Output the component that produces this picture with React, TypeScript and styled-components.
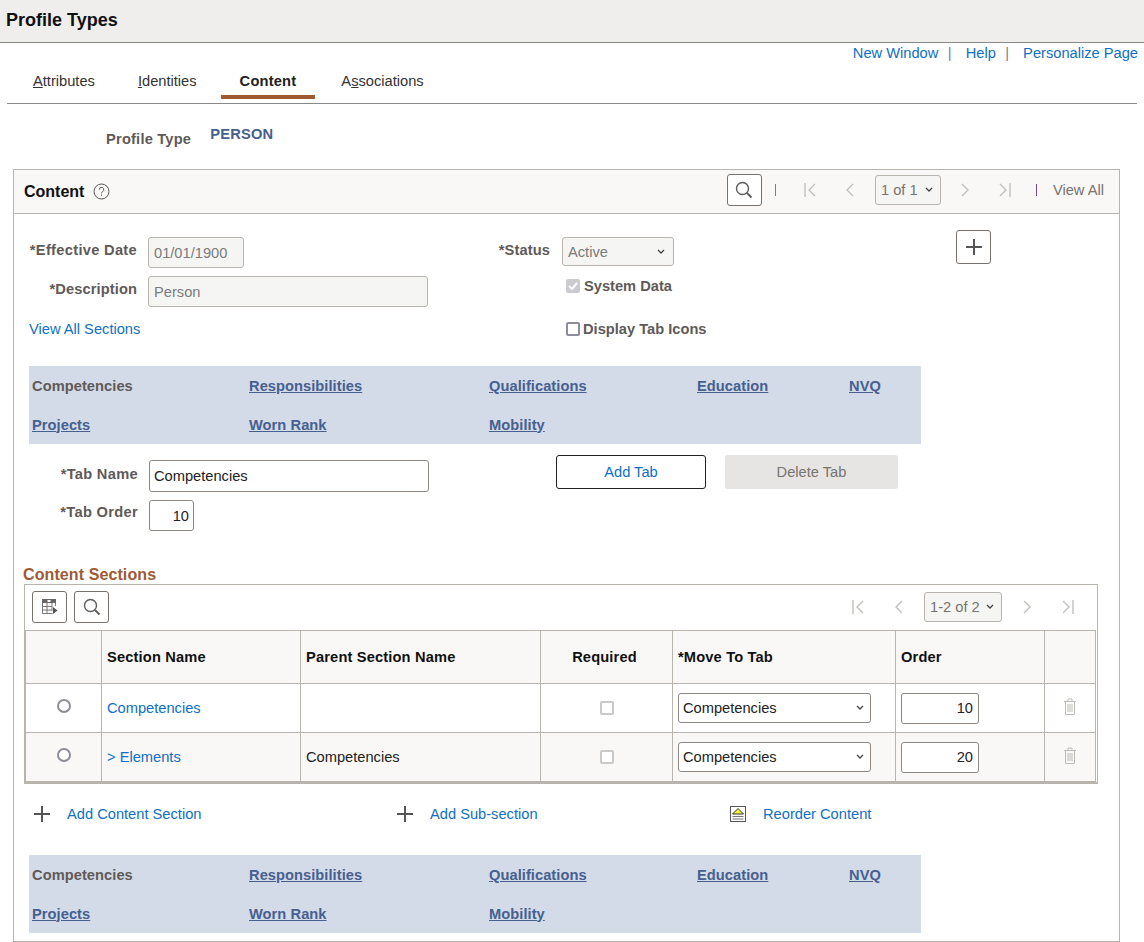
import React from 'react';
import styled, { createGlobalStyle } from 'styled-components';

const LINK = '#0f6fc6';
const LABEL = '#5f5a58';
const NAVY = '#46608f';
const RUST = '#9e5a35';
const LINE = '#b9b5ae';
const CHEVRON = "url(\"data:image/svg+xml,%3Csvg xmlns='http://www.w3.org/2000/svg' width='10' height='6'%3E%3Cpath d='M2 1l3 3 3-3' fill='none' stroke='%23444' stroke-width='1.3'/%3E%3C/svg%3E\")";

const GlobalStyle = createGlobalStyle`
  html, body {
    margin: 0;
    background: #fff;
    font-family: "Liberation Sans", Arial, sans-serif;
    font-size: 14.67px;
    color: #222;
  }
  * { box-sizing: border-box; }
`;

const Page = styled.div`
  width: 1144px;
  height: 942px;
  overflow: hidden;
`;

const TitleBar = styled.header`
  height: 43px;
  padding: 10px 0 0 6px;
  background: #efeeec;
  border-bottom: 1px solid #8a8a88;
`;

const Title = styled.h1`
  margin: 0;
  font-size: 18px;
  line-height: 20px;
  font-weight: 700;
  color: #111;
`;

const TopLinks = styled.nav`
  display: flex;
  justify-content: flex-end;
  height: 21px;
  padding: 2px 6px 0 0;
  line-height: 17px;
`;

const Link = styled.a`
  color: ${LINK};
  text-decoration: none;
  white-space: nowrap;
`;

const Pipe = styled.span`
  margin: 0 14px 0 9.500px;
  color: #6f8494;
`;

const TabBar = styled.div`
  display: flex;
  gap: 5px;
  height: 40px;
  margin: 0 7px;
  padding-left: 7px;
  border-bottom: 1px solid #8a8a88;
`;

const Tab = styled.div<{ $active?: boolean }>`
  height: 35px;
  margin-right: ${(p) => (p.$active ? 2 : 0)}px;
  padding: 9px 19px 0;
  line-height: 17px;
  font-weight: ${(p) => (p.$active ? 700 : 400)};
  letter-spacing: ${(p) => (p.$active ? 0.2 : 0)}px;
  color: ${(p) => (p.$active ? '#222' : '#333')};
  border-bottom: ${(p) => (p.$active ? `4px solid ${RUST}` : 'none')};
`;

const ProfileRow = styled.div`
  display: flex;
  height: 65px;
  padding: 22px 0 0 106px;
  font-weight: 700;
  letter-spacing: 0.2px;
`;

const ProfileLabel = styled.span`
  margin-top: 5px;
  color: ${LABEL};
  line-height: 17px;
`;

const ProfileValue = styled.span`
  margin-left: 19px;
  color: ${NAVY};
  line-height: 17px;
`;

const ContentBox = styled.section`
  width: 1107px;
  height: 773px;
  margin-left: 13px;
  border: 1px solid ${LINE};
`;

const BoxHeader = styled.div`
  display: flex;
  align-items: center;
  height: 44px;
  padding-left: 10px;
  background: #f9f8f6;
  border-bottom: 1px solid ${LINE};
`;

const BoxTitle = styled.h2`
  margin: 0 9px 0 0;
  font-size: 16px;
  font-weight: 700;
  color: #111;
`;

const Pager = styled.div`
  display: flex;
  align-items: center;
  margin: 0 0 3px auto;
  padding-right: 15px;
`;

const IconButton = styled.button<{ $size?: number }>`
  display: flex;
  align-items: center;
  justify-content: center;
  width: 35px;
  height: ${(p) => p.$size ?? 32}px;
  padding: 0;
  background: #fff;
  border: 1px solid #77726e;
  border-radius: 3px;
`;

const Divider = styled.span<{ $left: number; $right: number; $color: string }>`
  width: 1px;
  height: 12px;
  margin: 0 ${(p) => p.$right}px 0 ${(p) => p.$left}px;
  background: ${(p) => p.$color};
`;

const PagerIcon = styled.svg<{ $left?: number }>`
  display: block;
  flex: none;
  margin-left: ${(p) => p.$left ?? 0}px;
  fill: none;
  stroke: #c2c0bb;
  stroke-width: 1.4;
`;

const PagerSelect = styled.select<{ $width: number; $left: number }>`
  appearance: none;
  width: ${(p) => p.$width}px;
  height: 30px;
  margin-left: ${(p) => p.$left}px;
  padding: 0 0 0 5px;
  font: inherit;
  font-size: 14.67px;
  color: #77736f;
  opacity: 1;
  background: #f5f5f3 ${CHEVRON} no-repeat right 6px center;
  border: 1px solid ${LINE};
  border-radius: 3px;
`;

const ViewAll = styled.span`
  color: #77736f;
`;

const BoxBody = styled.div`
  padding: 16px 0 0 9px;
`;

const FormGrid = styled.div`
  display: grid;
  grid-template-columns: 108px 291px 122px 406px 35px;
  grid-template-rows: 38px 31px 21px;
  row-gap: 8px;
  margin-left: 6px;
`;

const FieldLabel = styled.label<{ $tight?: boolean }>`
  font-weight: 700;
  letter-spacing: ${(p) => (p.$tight ? 0.1 : 0.3)}px;
  color: ${LABEL};
  text-align: right;
  line-height: 17px;
  white-space: nowrap;
`;

const TopFieldLabel = styled(FieldLabel)`
  align-self: end;
  margin-bottom: 9px;
`;

const DescLabel = styled(FieldLabel)`
  margin-top: 5px;
`;

const Input = styled.input<{ $width: number; $align?: string }>`
  display: block;
  width: ${(p) => p.$width}px;
  height: 31px;
  padding: 0 5px;
  font: inherit;
  color: #222;
  text-align: ${(p) => p.$align ?? 'left'};
  background: #fff;
  border: 1px solid #8f8882;
  border-radius: 3px;

  &:disabled {
    color: #7b7b7b;
    background: #f5f5f3;
    border-color: ${LINE};
  }
`;

const DateInput = styled(Input)`
  align-self: end;
  margin-left: 11px;
`;

const DescInput = styled(Input)`
  margin-left: 11px;
`;

const StatusSelect = styled.select`
  appearance: none;
  align-self: end;
  width: 112px;
  height: 29px;
  margin: 0 0 2px 12px;
  padding: 0 0 0 5px;
  font: inherit;
  color: #7b7b7b;
  opacity: 1;
  background: #f5f5f3 ${CHEVRON} no-repeat right 7px center;
  border: 1px solid ${LINE};
  border-radius: 3px;
`;

const AddRowButton = styled(IconButton)`
  align-self: start;
`;

const CheckRow = styled.div<{ $gap: number }>`
  display: flex;
  align-items: center;
  gap: ${(p) => p.$gap}px;
  height: 14px;
  margin: 3px 0 0 16px;
  font-weight: 700;
  color: ${LABEL};
  white-space: nowrap;
`;

const CheckBox = styled.span<{ $state: 'on' | 'off' | 'dim' }>`
  display: flex;
  flex: none;
  align-items: center;
  justify-content: center;
  width: 14px;
  height: 14px;
  border-radius: 2px;
  background: ${(p) => (p.$state === 'on' ? '#cbcbcf' : '#fff')};
  border: ${(p) => (p.$state === 'on' ? 'none' : p.$state === 'off' ? '2px solid #8e8c98' : '2px solid #c9c9cc')};
`;

const SectionLink = styled(Link)`
  align-self: end;
  line-height: 14px;
`;

const DisplayRow = styled(CheckRow)`
  align-self: end;
  margin-top: 0;
`;

const Band = styled.div<{ $top: number }>`
  display: grid;
  grid-template-columns: 217px 240px 208px 152px 72px;
  grid-auto-rows: 39px;
  align-items: center;
  width: 892px;
  margin: ${(p) => p.$top}px 0 0 6px;
  padding-left: 3px;
  font-weight: 700;
  letter-spacing: 0.05px;
  background: #d4dbe8;
`;

const BandCurrent = styled.span`
  color: ${LABEL};
`;

const BandLink = styled.a`
  color: ${NAVY};
  text-decoration: underline;
`;

const TabForm = styled.div`
  display: grid;
  grid-template-columns: 109px 291px 127px 150px 192px;
  grid-template-rows: 37px 31px;
  row-gap: 8px;
  margin: 11px 0 0 6px;
`;

const TabLabel = styled(FieldLabel)`
  grid-column: 1;
  grid-row: 1;
  align-self: end;
  margin-bottom: 9px;
`;

const OrderLabel = styled(FieldLabel)`
  grid-column: 1;
  grid-row: 2;
  margin-top: 4px;
`;

const TabNameInput = styled(Input)`
  grid-column: 2;
  grid-row: 1;
  align-self: end;
  height: 32px;
  margin-left: 11px;
  padding-left: 4px;
`;

const TabOrderInput = styled(Input)`
  grid-column: 2;
  grid-row: 2;
  margin-left: 11px;
  padding-right: 4px;
`;

const AddTab = styled.button`
  grid-column: 4;
  grid-row: 1;
  align-self: start;
  height: 34px;
  padding: 0;
  font: inherit;
  color: ${LINK};
  background: #fff;
  border: 1px solid #222;
  border-radius: 3px;
`;

const DeleteTab = styled.button`
  grid-column: 5;
  grid-row: 1;
  align-self: start;
  width: 173px;
  height: 34px;
  margin-left: 19px;
  padding: 0;
  font: inherit;
  color: #77736f;
  background: #e6e5e3;
  border: none;
  border-radius: 3px;
`;

const SectionsTitle = styled.h3`
  margin: 35px 0 1px;
  font-size: 16px;
  line-height: 17px;
  font-weight: 700;
  letter-spacing: 0.1px;
  color: ${RUST};
`;

const GridFrame = styled.div`
  width: 1074px;
  margin-left: 1px;
  border: 1px solid ${LINE};
  border-bottom-width: 2px;
`;

const GridToolbar = styled.div`
  display: flex;
  align-items: center;
  gap: 7px;
  height: 45px;
  padding: 0 0 1px 7px;
`;

const GridPager = styled.div`
  display: flex;
  align-items: center;
  margin: 0 0 1px auto;
  padding-right: 23px;
`;

const Table = styled.table`
  width: 1070px;
  table-layout: fixed;
  border-collapse: collapse;
`;

const HeadCell = styled.th<{ $center?: boolean }>`
  height: 53px;
  padding: ${(p) => (p.$center ? '0 9px 0 5px' : '0 5px')};
  font-weight: 700;
  letter-spacing: 0.15px;
  color: #111;
  text-align: ${(p) => (p.$center ? 'center' : 'left')};
  background: #f9f8f6;
  border: 1px solid ${LINE};
`;

const Row = styled.tr<{ $alt?: boolean }>`
  background: ${(p) => (p.$alt ? '#f9f8f6' : '#fff')};
`;

const Cell = styled.td<{ $center?: boolean }>`
  height: 49px;
  padding: 0 5px;
  color: #222;
  text-align: ${(p) => (p.$center ? 'center' : 'left')};
  border: 1px solid ${LINE};
`;

const Radio = styled.span`
  display: block;
  width: 14px;
  height: 14px;
  margin: -5px auto 0;
  background: #fff;
  border: 2px solid #8e8c98;
  border-radius: 50%;
`;

const MiniCheck = styled(CheckBox)`
  margin: 0 auto;
`;

const RowSelect = styled.select`
  appearance: none;
  display: block;
  width: 193px;
  height: 30px;
  padding: 0 0 0 4px;
  font: inherit;
  color: #222;
  background: #fff ${CHEVRON} no-repeat right 5px center;
  border: 1px solid #8f8882;
  border-radius: 3px;
`;

const TrashIcon = styled.svg`
  display: block;
  margin: -3px auto 0;
  fill: none;
  stroke: #bdbbb6;
`;

const ActionRow = styled.div`
  display: grid;
  grid-template-columns: 363px 333px 300px;
  height: 18px;
  margin: 21px 0 0 11px;
`;

const ActionItem = styled.div`
  display: flex;
  align-items: center;
  gap: 17px;
`;

const SearchGlyph = () => (
  <svg width="20" height="20" viewBox="0 0 20 20" fill="none" stroke="#5f5d5b">
    <circle cx="8.500" cy="8.500" r="6" strokeWidth="1.400" />
    <path d="M13 13l4.500 4.500" strokeWidth="2" />
  </svg>
);

const PlusGlyph = () => (
  <svg width="16" height="16" viewBox="0 0 16 16" stroke="#555" strokeWidth="2">
    <path d="M8 0v16M0 8h16" />
  </svg>
);

const GridGlyph = () => (
  <svg width="16" height="16" viewBox="0 0 16 16" fill="none" stroke="#777">
    <path d="M0 0h14v4H0z" fill="#666" stroke="none" />
    <path d="M5.500 1h3v2h-3z" fill="#fff" stroke="none" />
    <path d="M.500 4v10.500h10M.500 7.500H10M.500 11H10M5 4v10.500M10 4v8M13.500 4v3" />
    <path d="M11 8l4.500 3.500-4.500 3.500z" fill="#555" stroke="none" />
  </svg>
);

const ReorderGlyph = () => (
  <svg width="16" height="16" viewBox="0 0 16 16" fill="none">
    <rect x="0.500" y="0.500" width="15" height="15" fill="#fff" stroke="#555" />
    <path d="M8 2.500L13.500 8h-11z" fill="#f5ee3a" stroke="#333" />
    <path d="M2.500 10.500h11M2.500 13h11" stroke="#777" />
  </svg>
);

const First = ({ left }: { left?: number }) => (
  <PagerIcon $left={left} width="12" height="14" viewBox="0 0 12 14">
    <path d="M1 0v14M11 1L5 7l6 6" />
  </PagerIcon>
);

const Prev = ({ left }: { left?: number }) => (
  <PagerIcon $left={left} width="8" height="14" viewBox="0 0 8 14">
    <path d="M7 1L1 7l6 6" />
  </PagerIcon>
);

const Next = ({ left }: { left?: number }) => (
  <PagerIcon $left={left} width="8" height="14" viewBox="0 0 8 14">
    <path d="M1 1l6 6-6 6" />
  </PagerIcon>
);

const Last = ({ left }: { left?: number }) => (
  <PagerIcon $left={left} width="12" height="14" viewBox="0 0 12 14">
    <path d="M1 1l6 6-6 6M11 0v14" />
  </PagerIcon>
);

const Trash = () => (
  <TrashIcon width="14" height="17" viewBox="0 0 14 17">
    <path d="M1 3.500h12M5 3V1h4v2M2.500 3.500v13h9v-13M5 6v8M7 6v8M9 6v8" />
  </TrashIcon>
);

const BandContent = ({ top }: { top: number }) => (
  <Band $top={top}>
    <BandCurrent>Competencies</BandCurrent>
    <BandLink>Responsibilities</BandLink>
    <BandLink>Qualifications</BandLink>
    <BandLink>Education</BandLink>
    <BandLink>NVQ</BandLink>
    <BandLink>Projects</BandLink>
    <BandLink>Worn Rank</BandLink>
    <BandLink>Mobility</BandLink>
  </Band>
);

const rows = [
  { name: 'Competencies', parent: '', order: '10' },
  { name: '> Elements', parent: 'Competencies', order: '20' }
];

export default function App(): React.ReactElement {
  return (
    <Page>
      <GlobalStyle />
      <TitleBar>
        <Title>Profile Types</Title>
      </TitleBar>
      <TopLinks>
        <Link>New Window</Link>
        <Pipe>|</Pipe>
        <Link>Help</Link>
        <Pipe>|</Pipe>
        <Link>Personalize Page</Link>
      </TopLinks>
      <TabBar>
        <Tab><u>A</u>ttributes</Tab>
        <Tab><u>I</u>dentities</Tab>
        <Tab $active>Content</Tab>
        <Tab>A<u>s</u>sociations</Tab>
      </TabBar>
      <ProfileRow>
        <ProfileLabel>Profile Type</ProfileLabel>
        <ProfileValue>PERSON</ProfileValue>
      </ProfileRow>
      <ContentBox>
        <BoxHeader>
          <BoxTitle>Content</BoxTitle>
          <svg width="17" height="17" viewBox="0 0 17 17" fill="none" stroke="#555">
            <circle cx="8.500" cy="8.500" r="7.500" />
            <path d="M6.200 6.700a2.300 2.300 0 1 1 3.500 1.900c-.8.500-1.200.9-1.200 1.800M8.500 11.500v1.300" />
          </svg>
          <Pager>
            <IconButton><SearchGlyph /></IconButton>
            <Divider $left={13} $right={28} $color="#8a7f5a" />
            <First />
            <Prev left={30} />
            <PagerSelect $width={66} $left={21} disabled defaultValue="1">
              <option value="1">1 of 1</option>
            </PagerSelect>
            <Next left={20} />
            <Last left={30} />
            <Divider $left={25} $right={16} $color="#6a4f8a" />
            <ViewAll>View All</ViewAll>
          </Pager>
        </BoxHeader>
        <BoxBody>
          <FormGrid>
            <TopFieldLabel>*Effective Date</TopFieldLabel>
            <DateInput $width={96} disabled defaultValue="01/01/1900" />
            <TopFieldLabel $tight>*Status</TopFieldLabel>
            <StatusSelect disabled defaultValue="Active">
              <option>Active</option>
            </StatusSelect>
            <AddRowButton $size={34}><PlusGlyph /></AddRowButton>

            <DescLabel $tight>*Description</DescLabel>
            <DescInput $width={280} disabled defaultValue="Person" />
            <span />
            <CheckRow $gap={4}>
              <CheckBox $state="on">
                <svg width="10" height="8" viewBox="0 0 10 8" fill="none" stroke="#fff" strokeWidth="2">
                  <path d="M1 4l3 3 5-6" />
                </svg>
              </CheckBox>
              System Data
            </CheckRow>
            <span />

            <SectionLink>View All Sections</SectionLink>
            <span />
            <span />
            <DisplayRow $gap={3}>
              <CheckBox $state="off" />
              Display Tab Icons
            </DisplayRow>
          </FormGrid>

          <BandContent top={30} />

          <TabForm>
            <TabLabel>*Tab Name</TabLabel>
            <TabNameInput $width={280} defaultValue="Competencies" />
            <AddTab>Add Tab</AddTab>
            <DeleteTab disabled>Delete Tab</DeleteTab>
            <OrderLabel>*Tab Order</OrderLabel>
            <TabOrderInput $width={45} $align="right" defaultValue="10" />
          </TabForm>

          <SectionsTitle>Content Sections</SectionsTitle>
          <GridFrame>
            <GridToolbar>
              <IconButton><GridGlyph /></IconButton>
              <IconButton><SearchGlyph /></IconButton>
              <GridPager>
                <First />
                <Prev left={31} />
                <PagerSelect $width={78} $left={21} disabled defaultValue="1">
                  <option value="1">1-2 of 2</option>
                </PagerSelect>
                <Next left={21} />
                <Last left={31} />
              </GridPager>
            </GridToolbar>
            <Table>
              <colgroup>
                <col width="76" />
                <col width="199" />
                <col width="240" />
                <col width="132" />
                <col width="223" />
                <col width="149" />
                <col width="51" />
              </colgroup>
              <thead>
                <tr>
                  <HeadCell />
                  <HeadCell>Section Name</HeadCell>
                  <HeadCell>Parent Section Name</HeadCell>
                  <HeadCell $center>Required</HeadCell>
                  <HeadCell>*Move To Tab</HeadCell>
                  <HeadCell>Order</HeadCell>
                  <HeadCell />
                </tr>
              </thead>
              <tbody>
                {rows.map((row, i) => (
                  <Row $alt={i === 1} key={row.name}>
                    <Cell $center><Radio /></Cell>
                    <Cell><Link>{row.name}</Link></Cell>
                    <Cell>{row.parent}</Cell>
                    <Cell $center><MiniCheck $state="dim" /></Cell>
                    <Cell>
                      <RowSelect defaultValue="Competencies">
                        <option>Competencies</option>
                      </RowSelect>
                    </Cell>
                    <Cell><Input $width={78} $align="right" defaultValue={row.order} /></Cell>
                    <Cell $center><Trash /></Cell>
                  </Row>
                ))}
              </tbody>
            </Table>
          </GridFrame>

          <ActionRow>
            <ActionItem>
              <PlusGlyph />
              <Link>Add Content Section</Link>
            </ActionItem>
            <ActionItem>
              <PlusGlyph />
              <Link>Add Sub-section</Link>
            </ActionItem>
            <ActionItem>
              <ReorderGlyph />
              <Link>Reorder Content</Link>
            </ActionItem>
          </ActionRow>

          <BandContent top={32} />
        </BoxBody>
      </ContentBox>
    </Page>
  );
}
